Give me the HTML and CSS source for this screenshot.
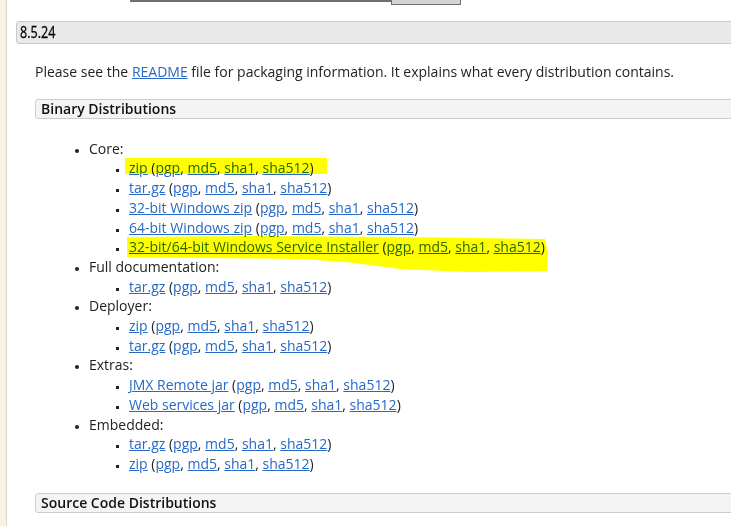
FILE: index.html
```html
<!DOCTYPE html>
<html>
<head>
<meta charset="utf-8">
<link rel="stylesheet" href="styles.css">
</head>
<body>
<div class="page">
  <div class="strip"></div>
  <main class="main">
    <form class="search">
      <input class="search-input" type="text">
      <button class="search-btn" type="button"></button>
    </form>
    <h3 class="version"><span class="version-text">8.5.24</span></h3>
    <div class="version-body">
      <p class="intro">Please see the <a href="#">README</a> file for packaging information. It explains what every distribution contains.</p>
      <h4 class="subhead">Binary Distributions</h4>
      <ul class="dist">
        <li>Core:
          <ul>
            <li><a href="#">zip</a> (<a href="#">pgp</a>, <a href="#">md5</a>, <a href="#">sha1</a>, <a href="#">sha512</a>)</li>
            <li><a href="#">tar.gz</a> (<a href="#">pgp</a>, <a href="#">md5</a>, <a href="#">sha1</a>, <a href="#">sha512</a>)</li>
            <li><a href="#">32-bit Windows zip</a> (<a href="#">pgp</a>, <a href="#">md5</a>, <a href="#">sha1</a>, <a href="#">sha512</a>)</li>
            <li><a href="#">64-bit Windows zip</a> (<a href="#">pgp</a>, <a href="#">md5</a>, <a href="#">sha1</a>, <a href="#">sha512</a>)</li>
            <li><a href="#">32-bit/64-bit Windows Service Installer</a> (<a href="#">pgp</a>, <a href="#">md5</a>, <a href="#">sha1</a>, <a href="#">sha512</a>)</li>
          </ul>
        </li>
        <li>Full documentation:
          <ul>
            <li><a href="#">tar.gz</a> (<a href="#">pgp</a>, <a href="#">md5</a>, <a href="#">sha1</a>, <a href="#">sha512</a>)</li>
          </ul>
        </li>
        <li>Deployer:
          <ul>
            <li><a href="#">zip</a> (<a href="#">pgp</a>, <a href="#">md5</a>, <a href="#">sha1</a>, <a href="#">sha512</a>)</li>
            <li><a href="#">tar.gz</a> (<a href="#">pgp</a>, <a href="#">md5</a>, <a href="#">sha1</a>, <a href="#">sha512</a>)</li>
          </ul>
        </li>
        <li>Extras:
          <ul>
            <li><a href="#">JMX Remote jar</a> (<a href="#">pgp</a>, <a href="#">md5</a>, <a href="#">sha1</a>, <a href="#">sha512</a>)</li>
            <li><a href="#">Web services jar</a> (<a href="#">pgp</a>, <a href="#">md5</a>, <a href="#">sha1</a>, <a href="#">sha512</a>)</li>
          </ul>
        </li>
        <li>Embedded:
          <ul>
            <li><a href="#">tar.gz</a> (<a href="#">pgp</a>, <a href="#">md5</a>, <a href="#">sha1</a>, <a href="#">sha512</a>)</li>
            <li><a href="#">zip</a> (<a href="#">pgp</a>, <a href="#">md5</a>, <a href="#">sha1</a>, <a href="#">sha512</a>)</li>
          </ul>
        </li>
      </ul>
      <h4 class="subhead">Source Code Distributions</h4>
    </div>
  </main>
  <svg class="highlight" width="731" height="526" viewBox="0 0 731 526">
    <rect x="125" y="158" width="202" height="16" fill="#ffff00"/>
    <polygon fill="#ffff00" points="127,237 250,236 400,237 545,239 548,252 547,271 470,272 400,269 345,262 300,259 200,258 127,257"/>
  </svg>
</div>
</body>
</html>
```
FILE: styles.css
```css
html, body {
  margin: 0;
  padding: 0;
  background: #ffffff;
}
.page {
  position: relative;
  display: flex;
  width: 731px;
  height: 526px;
  overflow: hidden;
  font-family: "Open Sans", "Liberation Sans", sans-serif;
  font-size: 14px;
  line-height: 19.7px;
  color: #222222;
}
.strip {
  flex: 0 0 6px;
  background: #f8f2e5;
  border-right: 1px solid #d9d6d0;
}
.main {
  flex: 1;
  padding-left: 9px;
  min-width: 0;
}
.search {
  display: flex;
  align-items: flex-start;
  margin: -20px 0 0 114px;
  height: 20px;
}
.search-input {
  box-sizing: border-box;
  width: 261px;
  height: 22px;
  margin: 0;
  border: 1px solid #6f6f6f;
  border-bottom-width: 2px;
  background: #fff;
}
.search-btn {
  box-sizing: border-box;
  width: 70px;
  height: 25px;
  margin: 0;
  border: 1px solid #6f6f6f;
  background: #d4d4d4;
}
.version {
  margin: 21px -20px 0 0;
  height: 23px;
  box-sizing: border-box;
  background: #e9e9e9;
  border: 1px solid #c9c9c9;
  border-radius: 3px;
  padding-left: 3px;
  font-weight: normal;
  font-size: 17px;
  line-height: 20px;
  color: #000;
}
.version-text {
  display: inline-block;
  transform: scaleX(0.74);
  transform-origin: left center;
  -webkit-text-stroke: 0.3px #000;
}
.version-body {
  padding-left: 19px;
}
.intro {
  margin: 18px 0 17px;
}
a {
  color: #2769c6;
  text-decoration: underline;
}
.subhead {
  margin: 0 -20px 0 0;
  height: 20px;
  box-sizing: border-box;
  background: #f4f4f4;
  border: 1px solid #cccccc;
  border-radius: 3px;
  padding-left: 5px;
  font-size: 14px;
  font-weight: 600;
  line-height: 18px;
  color: #111;
}
.dist {
  margin: 20px 0 19px;
  padding-left: 54px;
  list-style: disc;
}
.dist ul {
  margin: 0;
  padding-left: 40px;
  list-style: square;
}
.dist li::marker {
  font-size: 10px;
}
.dist li li::marker {
  font-size: 9px;
}
.highlight {
  position: absolute;
  top: 0;
  left: 0;
  pointer-events: none;
  mix-blend-mode: multiply;
}
```
